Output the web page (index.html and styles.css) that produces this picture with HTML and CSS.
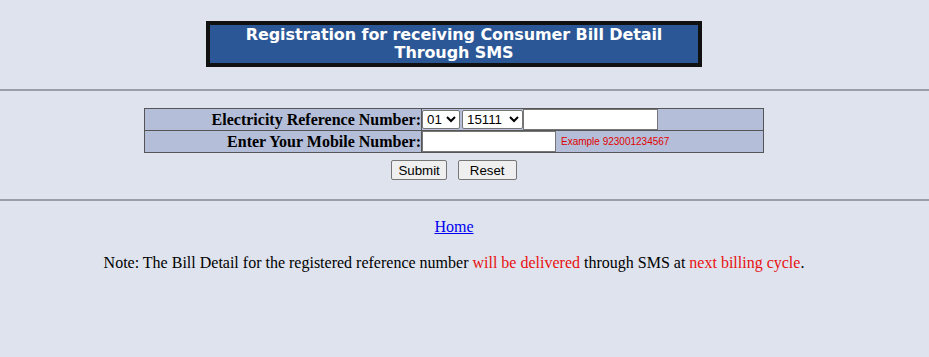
FILE: index.html
```html
<!DOCTYPE html>
<html>
<head>
<meta charset="utf-8">
<link rel="stylesheet" href="styles.css">
</head>
<body>
<div class="top">
  <div class="title">Registration for receiving Consumer Bill Detail<br>Through SMS</div>
</div>
<hr class="rule rule-a">
<form class="form">
  <table class="reg">
    <tr>
      <td class="lbl">Electricity Reference Number:</td>
      <td class="fld">
        <select class="sel sel-a"><option>01</option></select><select class="sel sel-b"><option>15111</option></select><input class="txt txt-a" type="text">
      </td>
    </tr>
    <tr>
      <td class="lbl">Enter Your Mobile Number:</td>
      <td class="fld">
        <input class="txt txt-b" type="text"><span class="example">Example 923001234567</span>
      </td>
    </tr>
  </table>
  <div class="buttons">
    <button type="button" class="btn">Submit</button>
    <button type="button" class="btn">Reset</button>
  </div>
</form>
<hr class="rule rule-b">
<div class="home"><a href="#">Home</a></div>
<p class="note">Note: The Bill Detail for the registered reference number <span class="red">will be delivered</span> through SMS at <span class="red">next billing cycle</span>.</p>
</body>
</html>
```
FILE: styles.css
```css
html, body {
  margin: 0;
  padding: 0;
  background: #dfe3ee;
}
body {
  font-family: "Liberation Serif", "Times New Roman", serif;
  font-size: 16px;
  color: #000;
}
.top {
  display: flex;
  justify-content: center;
  padding: 21px 21px 0 0;
}
.title {
  width: 488px;
  border: 4px solid #111;
  background: #2b5797;
  color: #fff;
  font-family: "DejaVu Sans", Verdana, sans-serif;
  font-weight: bold;
  font-size: 16px;
  line-height: 18px;
  text-align: center;
  padding: 1px 0 1px;
  letter-spacing: -0.1px;
}
.rule {
  border: 0;
  height: 0;
  border-top: 2px solid #9a9ea6;
  margin: 0;
}
.rule-a {
  margin-top: 22px;
}
.form {
  display: flex;
  flex-direction: column;
  align-items: center;
  padding: 17px 21px 0 0;
}
.reg {
  width: 620px;
  border-collapse: collapse;
  background: #b4bed8;
  border: 1px solid #333;
}
.reg td {
  border: 1px solid #555;
  padding: 0;
  height: 21px;
}
.lbl {
  text-align: right;
  font-weight: bold;
  width: 276px;
  white-space: nowrap;
}
.fld {
  white-space: nowrap;
  vertical-align: middle;
}
.sel {
  font-family: Arial, "Liberation Sans", sans-serif;
  font-size: 13.3px;
  height: 19px;
  border: 1px solid #767676;
  border-radius: 2px;
  background: #fff;
  vertical-align: middle;
  margin: 0;
  padding: 0;
}
.sel-a { width: 38px; margin-right: 2px; }
.sel-b { width: 61px; }
.txt {
  height: 21px;
  box-sizing: border-box;
  border: 1px solid #767676;
  background: #fff;
  vertical-align: middle;
  margin: 0;
}
.txt-a { width: 135px; }
.txt-b { width: 134px; }
.example {
  font-family: Arial, "Liberation Sans", sans-serif;
  font-size: 10px;
  color: #e00000;
  margin-left: 5px;
  vertical-align: middle;
}
.buttons {
  display: flex;
  gap: 11px;
  padding-top: 7px;
  padding-bottom: 19px;
}
.btn {
  font-family: Arial, "Liberation Sans", sans-serif;
  font-size: 13.3px;
  height: 20px;
  padding: 0 6px;
  background: #efefef;
  border: 1px solid #767676;
  border-radius: 2px;
  color: #000;
}
.btn + .btn { padding: 0 11px; }
.home {
  text-align: center;
  margin-top: 17px;
  padding-right: 21px;
}
.home a {
  color: #0000ee;
}
.note {
  text-align: center;
  margin: 18px 0 0;
  padding-right: 21px;
}
.red {
  color: #e81010;
}
```
